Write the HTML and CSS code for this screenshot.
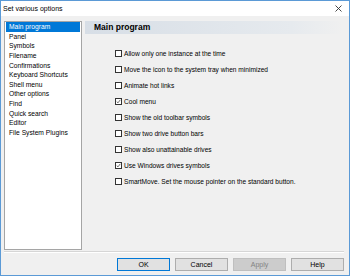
FILE: index.html
```html
<!DOCTYPE html>
<html lang="en">
<head>
  <meta charset="UTF-8" />
  <title>Set various options</title>
  <link rel="stylesheet" href="styles.css">
</head>
<body>
  <div class="window">
    <div class="titlebar">
      <span class="title">Set various options</span>
      <svg class="close" width="7" height="7" viewBox="0 0 7 7">
        <path d="M0.5 0.5 L6.5 6.5 M6.5 0.5 L0.5 6.5" stroke="#333" stroke-width="0.9" fill="none"/>
      </svg>
    </div>

    <div class="main">
      <ul class="list">
        <li class="selected">Main program</li>
        <li>Panel</li>
        <li>Symbols</li>
        <li>Filename</li>
        <li>Confirmations</li>
        <li>Keyboard Shortcuts</li>
        <li>Shell menu</li>
        <li>Other options</li>
        <li>Find</li>
        <li>Quick search</li>
        <li>Editor</li>
        <li>File System Plugins</li>
      </ul>

      <div class="panel">
        <div class="panel-head">Main program</div>
        <div class="options">
          <label class="opt"><span class="box"></span>Allow only one instance at the time</label>
          <label class="opt"><span class="box"></span>Move the icon to the system tray when minimized</label>
          <label class="opt"><span class="box"></span>Animate hot links</label>
          <label class="opt"><span class="box checked"><svg width="7" height="7" viewBox="0 0 7 7"><path d="M1 3.6 L2.8 5.4 L6 1.2" stroke="#222" stroke-width="0.9" fill="none"/></svg></span>Cool menu</label>
          <label class="opt"><span class="box"></span>Show the old toolbar symbols</label>
          <label class="opt"><span class="box"></span>Show two drive button bars</label>
          <label class="opt"><span class="box"></span>Show also unattainable drives</label>
          <label class="opt"><span class="box checked"><svg width="7" height="7" viewBox="0 0 7 7"><path d="M1 3.6 L2.8 5.4 L6 1.2" stroke="#222" stroke-width="0.9" fill="none"/></svg></span>Use Windows drives symbols</label>
          <label class="opt"><span class="box"></span>SmartMove. Set the mouse pointer on the standard button.</label>
        </div>
      </div>
    </div>

    <div class="sep"></div>

    <div class="buttons">
      <button class="btn default">OK</button>
      <button class="btn">Cancel</button>
      <button class="btn" disabled>Apply</button>
      <button class="btn">Help</button>
    </div>
  </div>
</body>
</html>
```

FILE: styles.css
```css
:root {
  --bg: #f0f0f0;
  --frame: #5b9ad6;
  --accent: #0078d7;
  --text: #000;
}
* { box-sizing: border-box; margin:0; padding:0; }
body {
  font-family: "Liberation Sans", Arial, sans-serif;
  font-size: 6.7px;
  color: var(--text);
  background: #fff;
}
.window {
  width:350px; height:276px;
  border:1px solid var(--frame);
  background: var(--bg);
  display:flex; flex-direction:column;
}
.titlebar {
  height:15px; background:#fff;
  display:flex; align-items:center; justify-content:space-between;
  padding:0 7px 0 2px;
  font-size:7px;
}
.main {
  display:flex; gap:3px;
  padding:5px 6px 0 3px;
}
.list {
  list-style:none;
  width:78px; height:229px;
  background:#fff;
  border:1px solid #a5a5a5;
  padding:0 1px;
}
.list li {
  height:9.65px; line-height:9.65px;
  padding-left:3px;
  white-space:nowrap;
}
.list li.selected { background: var(--accent); color:#fff; }
.panel { flex:1; }
.panel-head {
  height:13px; line-height:13px;
  padding-left:9px;
  font-size:8.5px; font-weight:bold;
  background: linear-gradient(to right, #d7dee6, #e6eaee 80%, #f0f0f0);
}
.options {
  display:flex; flex-direction:column;
  padding:12px 0 0 30px;
  font-size:6.6px;
}
.opt {
  display:flex; align-items:center; gap:2px;
  height:15.9px;
  white-space:nowrap;
}
.box {
  width:7px; height:7px;
  border:1px solid #333;
  background:#fff;
  display:flex; align-items:center; justify-content:center;
  flex-shrink:0;
}
.box svg { display:block; }
.sep {
  margin:1px 5px 0 3px;
  height:2px;
  border-top:1px solid #d6d6d6;
  border-bottom:1px solid #fff;
}
.buttons {
  display:flex; justify-content:flex-end; gap:5px;
  padding:5px 5px 0 0;
}
.btn {
  width:53px; height:13px;
  font-family:inherit; font-size:7px; color:var(--text);
  background:#e1e1e1;
  border:1px solid #adadad;
}
.btn.default { border-color: var(--accent); }
.btn:disabled { background:#cccccc; border-color:#bfbfbf; color:#838383; }
```
